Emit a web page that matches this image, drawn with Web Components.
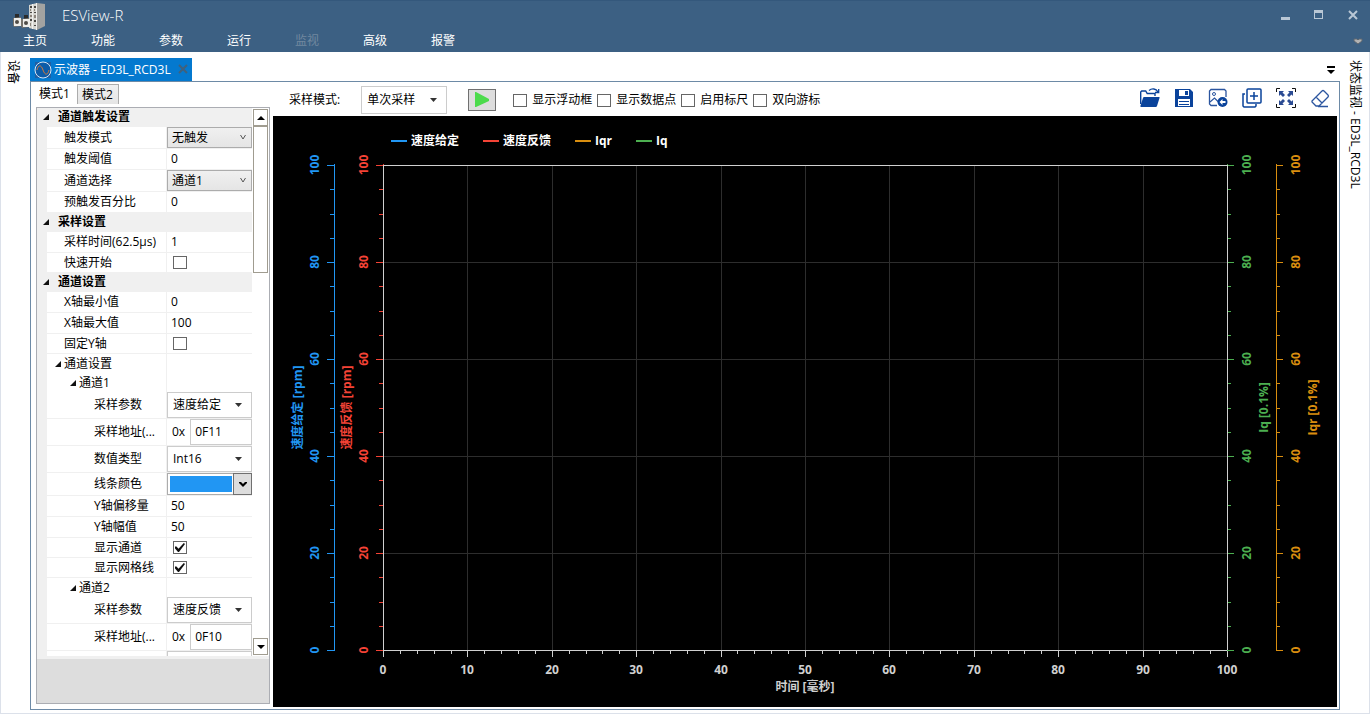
<!DOCTYPE html>
<html lang="zh-CN">
<head>
<meta charset="utf-8">
<title>ESView-R</title>
<style>
  body {
    margin: 0;
    font-family: "Open Sans", "Noto Sans CJK SC", sans-serif;
    font-size: 12px;
    line-height: 16px;
    color: #000;
  }
</style>
</head>
<body>
<es-app></es-app>

<script>
const controlReset = `
  *, *::before, *::after { box-sizing: border-box; }
  button, input, select { font: inherit; color: inherit; margin: 0; border-radius: 0; }
  button { padding: 0; border: none; background: none; cursor: pointer; }
  svg { display: block; }
`;

function attach(element, html) {
  const template = document.createElement("template");
  template.innerHTML = html;
  const root = element.attachShadow({ mode: "open", delegatesFocus: element.constructor.formAssociated === true });
  root.appendChild(template.content.cloneNode(true));
  return root;
}

const icons = {
  logo: `<svg width="34" height="27" viewBox="0 0 34 27">
    <path d="M17 2l8-2v27l-8-2z" fill="#d6d5d0"/>
    <path d="M25 0l8 1v22l-8 4z" fill="#a3a3a1"/>
    <path d="M20 1h1v25h-1zM24 0h1v27h-1z" fill="#f1f0ee"/>
    <path d="M18 3h2v2h-2zM22 3h2v2h-2zM18 9h2v1h-2zM22 9h2v1h-2zM18 16h2v2h-2zM22 17h2v2h-2zM22 22h2v1h-2z" fill="#4a4845"/>
    <path d="M18 6h1v2h-1zM22 6h1v2h-1zM18 12h2v2h-2zM22 12h2v3h-2zM18 20h1v3h-1z" fill="#8d857c"/>
    <path d="M3 11h4v5H3zM12 12h4v5h-4z" fill="#2b2b2b"/>
    <path d="M1 15l8-1v9l-7 1-1-2zM9 16l8-1v9l-7 1-1-2z" fill="#77736c"/>
    <path d="M2 15h7v8H2zM11 16h7v8h-7z" fill="#efeeea"/>
    <circle cx="5" cy="19" r="2" fill="#4e4b46"/><circle cx="14" cy="20" r="2" fill="#4e4b46"/>
  </svg>`,
  minimize: `<svg width="10" height="10" viewBox="0 0 10 10"><path d="M1 7h9v3H1z" fill="#b9c7d5"/></svg>`,
  maximize: `<svg width="10" height="10" viewBox="0 0 10 10"><path d="M0 0h9v9H0zM1 3v5h7V3z" fill="#b9c7d5" fill-rule="evenodd"/></svg>`,
  close: `<svg width="10" height="10" viewBox="0 0 10 10"><path d="M1 1l8 8M9 1l-8 8" stroke="#b9c7d5" stroke-width="2"/></svg>`,
  chevron: `<svg width="10" height="7" viewBox="0 0 10 7"><path d="M1 1h3l1 1 1-1h3v2L5 6 1 3z" fill="#b3b3b3" stroke="#5d6670"/></svg>`,
  scope: `<svg width="18" height="18" viewBox="0 0 18 18"><rect x="1" y="1" width="16" height="16" fill="#1f5fa3"/><circle cx="9" cy="9" r="8" fill="#0d5ca8" stroke="#d9e6f3"/><path d="M3 9c1-5 4-6 6 0s5 5 6 0" fill="none" stroke="#d07c3c"/></svg>`,
  tabClose: `<svg width="10" height="10" viewBox="0 0 10 10"><path d="M1 1l8 8M9 1l-8 8" stroke="#40617c" stroke-width="2"/></svg>`,
  tabList: `<svg width="8" height="8" viewBox="0 0 8 8"><path d="M0 0h8v2H0zM0 4h8L4 8z" fill="#000"/></svg>`,
  play: `<svg width="18" height="18" viewBox="0 0 18 18"><path d="M2 1h1l13 7v2L3 16H2z" fill="#4cdb4c"/></svg>`,
  open: `<svg width="20" height="20" viewBox="0 0 20 20"><path d="M.7 16V4l1-1h4l1.500 2.500H15V8" fill="none" stroke="#0a439b" stroke-width="1.400"/><path d="M4 9h15.500v1L17 18q-.5 1-1 1H1q-1 0-.500-1.500L3 10q.3-1 1-1z" fill="#0a439b"/><path d="M9 2.500c3-2.500 7-2 9 1.500M18.700 1v3.500H15" fill="none" stroke="#0a439b" stroke-width="1.300"/></svg>`,
  save: `<svg width="20" height="20" viewBox="0 0 20 20"><path d="M1 1h15l3 3v15H1z" fill="#0a439b"/><path d="M5 2h10v6H5zM4 11h12v7H4z" fill="#fff"/><path d="M11 3h3v4h-3z" fill="#0a439b"/><path d="M5 13.500h10M5 16.500h10" stroke="#0a439b"/></svg>`,
  image: `<svg width="20" height="20" viewBox="0 0 20 20"><path d="M9 17.500H3L1.500 16V3L3 1.500h13.500L18 3v6" fill="none" stroke="#2b559f" stroke-width="1.300"/><circle cx="6" cy="6" r="1.500" fill="none" stroke="#2b559f"/><path d="M2 14l4.500-4 4 4L14 10" fill="none" stroke="#2b559f" stroke-width="1.200"/><circle cx="14.500" cy="14" r="5" fill="#0a439b"/><path d="M11.500 14l3-3v2h3v2h-3v2z" fill="#fff"/></svg>`,
  copy: `<svg width="20" height="20" viewBox="0 0 20 20"><path d="M3 6H1v12l1 1h11l1-1v-2" fill="none" stroke="#0a439b" stroke-width="1.500"/><rect x="5" y="1" width="14" height="14" rx="1" fill="#fff" stroke="#0a439b" stroke-width="1.500"/><path d="M12 4v8M8 8h8" stroke="#0a439b" stroke-width="1.500"/></svg>`,
  fit: `<svg width="20" height="20" viewBox="0 0 20 20"><path d="M.5 4V.5H4M16 .5h3.500V4M19.500 16v3.500H16M4 19.500H.5V16" fill="none" stroke="#111"/><path d="M3 3h5L6.500 4.500 9 7 7 9 4.500 6.500 3 8zM17 3v5l-1.500-1.500L13 9l-2-2 2.500-2.500L12 3zM3 17v-5l1.500 1.500L7 11l2 2-2.500 2.500L8 17zM17 17h-5l1.500-1.500L11 13l2-2 2.500 2.500L17 12z" fill="#2b4b93"/></svg>`,
  erase: `<svg width="20" height="20" viewBox="0 0 20 20"><path d="M2 13L12 3q1-1 2 0l4 4q1 1 0 2L9 18H6l-4-4zM6 9l6 6M8 18.500h10" fill="none" stroke="#2b559f" stroke-width="1.300"/></svg>`,
};

class EsIcon extends HTMLElement {
  connectedCallback() {
    if (this.shadowRoot) return;
    attach(this, `
<style>
  :host { display: inline-flex; flex: none; }
  svg { display: block; }
</style>
${icons[this.getAttribute("name")]}`);
  }
}

class EsTitlebar extends HTMLElement {
  constructor() {
    super();
    attach(this, `
<style>
  ${controlReset}
  :host {
    display: block;
    height: 52px;
    background: #3c6083;
    border-top: 1px solid #34587c;
    color: #fff;
    box-sizing: border-box;
  }
  .title, .bar { display: flex; align-items: center; }
  .title { height: 30px; padding: 0 12px; }
  h1 { flex: 1; margin: 0; padding: 0 0 2px 16px; font-size: 15px; font-weight: 300; line-height: 20px; }
  .window { display: flex; gap: 24px; }
  .bar { height: 20px; padding: 0 7px 0 1px; }
  nav { display: flex; flex: 1; }
  nav button { padding: 0 22px; line-height: 22px; }
  nav button:disabled { color: #71889f; cursor: default; }
</style>
<div class="title">
  <es-icon name="logo"></es-icon>
  <h1>ESView-R</h1>
  <div class="window">
    <button aria-label="最小化"><es-icon name="minimize"></es-icon></button>
    <button aria-label="最大化"><es-icon name="maximize"></es-icon></button>
    <button aria-label="关闭"><es-icon name="close"></es-icon></button>
  </div>
</div>
<div class="bar">
  <nav>
    <button>主页</button>
    <button>功能</button>
    <button>参数</button>
    <button>运行</button>
    <button disabled>监视</button>
    <button>高级</button>
    <button>报警</button>
  </nav>
  <button aria-label="折叠"><es-icon name="chevron"></es-icon></button>
</div>`);
  }
}

class EsRail extends HTMLElement {
  constructor() {
    super();
    attach(this, `
<style>
  ${controlReset}
  :host { display: flex; justify-content: center; align-items: flex-start; width: 29px; flex: none; padding: 8px 5px 0 0; box-sizing: border-box; }
  :host([side="right"]) { padding-right: 0; }
  button { writing-mode: vertical-rl; text-orientation: sideways; line-height: 16px; white-space: nowrap; }
</style>
<button><slot></slot></button>`);
  }
}

class EsSelect extends HTMLElement {
  static formAssociated = true;

  connectedCallback() {
    if (this.shadowRoot) return;
    const value = this.getAttribute("value");
    attach(this, `
<style>
  ${controlReset}
  :host { display: flex; position: relative; align-items: stretch; }
  select {
    appearance: none;
    width: 100%;
    padding: 0 20px 0 5px;
    border: 1px solid #ccc;
    background: #fff;
    outline: none;
  }
  svg { position: absolute; right: 9px; top: calc(50% - 2px); pointer-events: none; }
  .chevron { display: none; }
  :host([raised]) select { padding-left: 4px; border-color: #acacac; background: linear-gradient(#f0f0f0, #e5e5e5); }
  :host([raised]) .arrow { display: none; }
  :host([raised]) .chevron { display: block; right: 6px; top: calc(50% - 3px); }
</style>
<select aria-label="${this.getAttribute("label")}"><option>${value}</option></select>
<svg class="arrow" width="8" height="4" viewBox="0 0 8 4"><path d="M0 0h7L3.500 4z" fill="#333"/></svg>
<svg class="chevron" width="6" height="5" viewBox="0 0 6 5"><path d="M.5 0L3 4 5.500 0" fill="none" stroke="#555"/></svg>`);
  }
}

class EsCheck extends HTMLElement {
  static formAssociated = true;

  connectedCallback() {
    if (this.shadowRoot) return;
    const label = this.getAttribute("label");
    attach(this, `
<style>
  ${controlReset}
  :host { display: inline-flex; }
  label { display: flex; align-items: center; gap: 5px; }
  input {
    appearance: none;
    display: grid;
    place-items: center;
    width: 14px;
    height: 13px;
    border: 1px solid #666;
    background: #fff;
  }
  input:checked::before {
    content: "";
    width: 10px;
    height: 9px;
    background: #111;
    clip-path: polygon(0 40%, 15% 40%, 35% 65%, 88% 0, 100% 12%, 40% 100%, 30% 100%, 0 60%);
  }
</style>
<label><input type="checkbox" aria-label="${label}" ${this.hasAttribute("checked") ? "checked" : ""}><slot></slot></label>`);
  }
}

class EsGroup extends HTMLElement {
  connectedCallback() {
    if (this.shadowRoot) return;
    attach(this, `
<style>
  ${controlReset}
  :host { display: block; }
  button {
    display: flex;
    align-items: center;
    width: 100%;
    height: 19px;
    gap: 9px;
    padding: 0 0 2px 6px;
    background: #f0f0f0;
    font-weight: bold;
  }
  .rows { margin-left: 10px; background: #fff; }
  :host([closed]) .rows { display: none; }
</style>
<button><svg width="6" height="6" viewBox="0 0 6 6"><path d="M6 0v6H0z" fill="#111"/></svg>${this.getAttribute("heading")}</button>
<div class="rows"><slot></slot></div>`);
    this.shadowRoot.querySelector("button").addEventListener("click", () => {
      this.toggleAttribute("closed");
    });
  }
}

class EsRow extends HTMLElement {
  connectedCallback() {
    if (this.shadowRoot) return;
    const kind = this.getAttribute("kind");
    const label = this.getAttribute("label");
    attach(this, `
<style>
  ${controlReset}
  :host { display: grid; grid-template-columns: 120px 1fr; height: 21px; }
  :host([kind="raised"]) { height: 22px; }
  :host([kind="check"]) { height: 20px; }
  :host([kind="branch"]) { height: 19px; }
  :host([kind="combo"]), :host([kind="hex"]) { height: 27px; }
  :host([kind="color"]) { height: 23px; }
  .name, .value { border-bottom: 1px solid #f0f0f0; min-width: 0; display: flex; align-items: center; }
  .name { border-right: 1px solid #f0f0f0; padding-left: 17px; white-space: nowrap; }
  :host([level="2"]) .name { padding-left: 32px; }
  :host([level="3"]) .name { padding-left: 47px; }
  :host([kind="branch"]) .name, :host([kind="branch"]) .value { border-bottom: none; }
  .twist { display: flex; align-items: center; gap: 3px; margin-left: -9px; }
  input { width: 100%; min-width: 0; padding: 0 4px; border: none; outline: none; background: none; }
  es-select { flex: 1; align-self: stretch; }
  es-check { margin-left: 6px; }
  .prefix { padding: 0 5px; }
  .hex { align-self: stretch; border: 1px solid #ccc; flex: 1; }
  .color { display: flex; flex: 1; align-self: stretch; border: 1px solid #acacac; }
  .swatch { flex: 1; margin: 2px; background: #2196f3; }
  .drop { display: grid; place-items: center; width: 19px; margin: -1px; border: 1px solid #707070; background: #ddd; }
</style>
<div class="name">${this.nameMarkup(kind, label)}</div>
<div class="value">${this.valueMarkup(kind, label, this.getAttribute("value"))}</div>`);
  }

  nameMarkup(kind, label) {
    if (kind === "branch") {
      return `<button class="twist"><svg width="6" height="6" viewBox="0 0 6 6"><path d="M6 0v6H0z" fill="#111"/></svg>${label}</button>`;
    }
    return `<label for="field">${label}</label>`;
  }

  valueMarkup(kind, label, value) {
    switch (kind) {
      case "raised":
        return `<es-select id="field" raised label="${label}" value="${value}"></es-select>`;
      case "combo":
        return `<es-select id="field" label="${label}" value="${value}"></es-select>`;
      case "check":
        return `<es-check id="field" label="${label}" ${value ? "checked" : ""}></es-check>`;
      case "hex":
        return `<span class="prefix">0x</span><input id="field" class="hex" type="text" value="${value}">`;
      case "color":
        return `<div class="color"><span class="swatch"></span><button id="field" class="drop" aria-label="${label}"><svg width="8" height="5" viewBox="0 0 8 5"><path d="M0 0h2l2 2 2-2h2v1L4 5 0 1z" fill="#000"/></svg></button></div>`;
      case "branch":
        return "";
      default:
        return `<input id="field" type="text" value="${value}">`;
    }
  }
}

class EsPropertyGrid extends HTMLElement {
  constructor() {
    super();
    const root = attach(this, `
<style>
  ${controlReset}
  :host { display: flex; flex-direction: column; min-height: 0; border: 1px solid #abadb3; background: #ddd; }
  .body { display: flex; flex: 1; min-height: 0; background: #fff; border-bottom: 3px solid #f0f0f0; }
  .list { flex: 1; min-width: 0; overflow: hidden; background: linear-gradient(90deg, #f0f0f0 10px, #fff 10px); }
  .scroll { display: flex; flex-direction: column; width: 17px; padding: 1px; }
  .scroll button { display: grid; place-items: center; height: 17px; border: 1px solid #a09c90; background: #fff; }
  .thumb { height: 147px; border: 1px solid #a09c90; background: #fff; }
  .track { flex: 1; }
  .help { height: 44px; }
</style>
<div class="body">
  <div class="list"><slot></slot></div>
  <div class="scroll">
    <button aria-label="向上"><svg width="8" height="4" viewBox="0 0 8 4"><path d="M0 4h8L4 0z"/></svg></button>
    <div class="thumb"></div>
    <div class="track"></div>
    <button aria-label="向下"><svg width="8" height="4" viewBox="0 0 8 4"><path d="M0 0h8L4 4z"/></svg></button>
  </div>
</div>
<div class="help"></div>`);
    const list = root.querySelector(".list");
    const [up, down] = root.querySelectorAll(".scroll button");
    up.addEventListener("click", () => { list.scrollTop -= 40; });
    down.addEventListener("click", () => { list.scrollTop += 40; });
  }
}

class EsSettings extends HTMLElement {
  constructor() {
    super();
    attach(this, `
<style>
  ${controlReset}
  :host { display: flex; flex-direction: column; width: 242px; flex: none; padding: 2px 3px 5px 5px; box-sizing: border-box; min-height: 0; }
  .tabs { display: flex; align-items: stretch; height: 20px; margin-bottom: 3px; }
  .tabs .current { padding: 0 7px 0 3px; }
  .tabs .other { padding: 0 5px 0 4px; border: 1px solid #acacac; border-bottom: none; background: linear-gradient(#f0f0f0, #e5e5e5); }
  es-property-grid { flex: 1; }
</style>
<div class="tabs"><button class="current">模式1</button><button class="other">模式2</button></div>
<es-property-grid>
  <es-group heading="通道触发设置">
    <es-row kind="raised" label="触发模式" value="无触发"></es-row>
    <es-row label="触发阈值" value="0"></es-row>
    <es-row kind="raised" label="通道选择" value="通道1"></es-row>
    <es-row label="预触发百分比" value="0"></es-row>
  </es-group>
  <es-group heading="采样设置">
    <es-row label="采样时间(62.5μs)" value="1"></es-row>
    <es-row kind="check" label="快速开始"></es-row>
  </es-group>
  <es-group heading="通道设置">
    <es-row label="X轴最小值" value="0"></es-row>
    <es-row label="X轴最大值" value="100"></es-row>
    <es-row kind="check" label="固定Y轴"></es-row>
    <es-row kind="branch" label="通道设置"></es-row>
    <es-row kind="branch" level="2" label="通道1"></es-row>
    <es-row kind="combo" level="3" label="采样参数" value="速度给定"></es-row>
    <es-row kind="hex" level="3" label="采样地址(..." value="0F11"></es-row>
    <es-row kind="combo" level="3" label="数值类型" value="Int16"></es-row>
    <es-row kind="color" level="3" label="线条颜色"></es-row>
    <es-row level="3" label="Y轴偏移量" value="50"></es-row>
    <es-row level="3" label="Y轴幅值" value="50"></es-row>
    <es-row kind="check" level="3" label="显示通道" value="on"></es-row>
    <es-row kind="check" level="3" label="显示网格线" value="on"></es-row>
    <es-row kind="branch" level="2" label="通道2"></es-row>
    <es-row kind="combo" level="3" label="采样参数" value="速度反馈"></es-row>
    <es-row kind="hex" level="3" label="采样地址(..." value="0F10"></es-row>
    <es-row kind="combo" level="3" label="" value=""></es-row>
  </es-group>
</es-property-grid>`);
  }
}

class EsToolbar extends HTMLElement {
  constructor() {
    super();
    attach(this, `
<style>
  ${controlReset}
  :host { display: flex; align-items: center; height: 34px; padding: 2px 9px 0 16px; box-sizing: border-box; white-space: nowrap; }
  es-select { width: 86px; height: 28px; margin: 0 21px; }
  .run { display: grid; place-items: center; width: 28px; height: 22px; margin-right: 17px; border: 1px solid #707070; background: #ddd; }
  .checks { display: flex; gap: 5px; flex: 1; }
  .tools { display: flex; gap: 14px; }
</style>
<span>采样模式:</span>
<es-select label="采样模式" value="单次采样"></es-select>
<button class="run" aria-label="开始"><es-icon name="play"></es-icon></button>
<div class="checks">
  <es-check label="显示浮动框">显示浮动框</es-check>
  <es-check label="显示数据点">显示数据点</es-check>
  <es-check label="启用标尺">启用标尺</es-check>
  <es-check label="双向游标">双向游标</es-check>
</div>
<div class="tools">
  <button aria-label="打开"><es-icon name="open"></es-icon></button>
  <button aria-label="保存"><es-icon name="save"></es-icon></button>
  <button aria-label="图片"><es-icon name="image"></es-icon></button>
  <button aria-label="复制"><es-icon name="copy"></es-icon></button>
  <button aria-label="全屏"><es-icon name="fit"></es-icon></button>
  <button aria-label="清除"><es-icon name="erase"></es-icon></button>
</div>`);
  }
}

const channels = [
  { name: "速度给定", unit: "rpm", color: "#2196f3", side: -1, offset: 49 },
  { name: "速度反馈", unit: "rpm", color: "#f44336", side: -1, offset: 0 },
  { name: "Iqr", unit: "0.1%", color: "#d98e0f", side: 1, offset: 49 },
  { name: "Iq", unit: "0.1%", color: "#4caf50", side: 1, offset: 0 },
];

class EsChart extends HTMLElement {
  constructor() {
    super();
    const root = attach(this, `
<style>
  :host { display: flex; flex-direction: column; min-height: 0; background: #000; font-weight: bold; }
  .legend { display: flex; gap: 24px; padding: 17px 0 0 118px; height: 16px; color: #fff; }
  .legend span { display: flex; align-items: center; gap: 4px; }
  .legend i { width: 16px; height: 2px; }
  .plot { flex: 1; min-height: 0; overflow: hidden; }
  svg { display: block; font-size: 12px; }
</style>
<div class="legend">${channels.map((c) => `<span><i style="background: ${c.color}"></i>${c.name}</span>`).join("")}</div>
<div class="plot"></div>`);
    this.plot = root.querySelector(".plot");
  }

  connectedCallback() {
    this.draw();
    this.observer = new ResizeObserver(() => this.draw());
    this.observer.observe(this.plot);
  }

  disconnectedCallback() {
    this.observer.disconnect();
  }

  draw() {
    const width = this.plot.clientWidth;
    const height = this.plot.clientHeight;
    const left = 110;
    const right = width - 110;
    const top = 16;
    const bottom = height - 57;
    if (right <= left || bottom <= top) return;

    const xAt = (v) => Math.round(left + ((right - left) * v) / 100);
    const yAt = (v) => Math.round(bottom - ((bottom - top) * v) / 100);
    const line = (x, y, w, h, color) =>
      `<rect x="${x}" y="${y}" width="${w}" height="${h}" fill="${color}"/>`;
    const upright = (x, y, text, color) =>
      `<text transform="translate(${x + 4} ${y}) rotate(-90)" text-anchor="middle" fill="${color}">${text}</text>`;

    let out = "";
    for (let v = 10; v < 100; v += 10) out += line(xAt(v), top, 1, bottom - top, "#2d2d2d");
    for (let v = 20; v < 100; v += 20) out += line(left, yAt(v), right - left, 1, "#2d2d2d");

    for (let v = 0; v <= 100; v += 2) {
      const major = v % 10 === 0;
      out += line(xAt(v), bottom, 1, major ? 7 : 4, "#d0d0d0");
      if (major) out += `<text x="${xAt(v)}" y="${bottom + 24}" text-anchor="middle" fill="#d0d0d0">${v}</text>`;
    }
    out += `<text x="${(left + right) / 2}" y="${bottom + 41}" text-anchor="middle" fill="#d0d0d0">时间 [毫秒]</text>`;

    for (const c of channels) {
      const x = (c.side < 0 ? left : right) + c.side * c.offset;
      out += line(x, top - 1, 1, bottom - top + 2, c.color);
      for (let v = 0; v <= 100; v += 5) {
        const size = v % 20 === 0 ? 7 : 4;
        out += line(c.side < 0 ? x - size : x, yAt(v), size, 1, c.color);
        if (v % 20 === 0) out += upright(x + c.side * (c.side < 0 ? 19 : 20), yAt(v), v, c.color);
      }
      out += upright(x + c.side * (c.side < 0 ? 36 : 37), (top + bottom) / 2, `${c.name} [${c.unit}]`, c.color);
    }

    out += line(left, top, right - left, 1, "#d0d0d0");
    out += line(left, bottom, right - left, 1, "#d0d0d0");
    out += line(left, top, 1, bottom - top, "#d0d0d0");
    out += line(right, top, 1, bottom - top, "#d0d0d0");
    this.plot.innerHTML = `<svg width="${width}" height="${height}">${out}</svg>`;
  }
}

class EsDocument extends HTMLElement {
  constructor() {
    super();
    attach(this, `
<style>
  ${controlReset}
  :host { display: flex; flex-direction: column; min-width: 0; min-height: 0; padding: 6px 0 3px; box-sizing: border-box; }
  .strip { display: flex; align-items: center; justify-content: space-between; height: 23px; padding-right: 5px; }
  .tab { display: flex; align-items: center; height: 23px; padding: 0 4px; gap: 2px; background: #0479cf; color: #fff; }
  .tab button { margin-left: 5px; }
  .panel { display: flex; flex: 1; min-height: 0; border: 1px solid #6d8aa6; }
  .view { display: flex; flex-direction: column; flex: 1; min-width: 0; min-height: 0; }
  es-chart { flex: 1; margin: 0 2px 2px 0; }
</style>
<div class="strip">
  <div class="tab">
    <es-icon name="scope"></es-icon>
    <span>示波器 - ED3L_RCD3L</span>
    <button aria-label="关闭"><es-icon name="tabClose"></es-icon></button>
  </div>
  <button aria-label="窗口列表"><es-icon name="tabList"></es-icon></button>
</div>
<div class="panel">
  <es-settings></es-settings>
  <div class="view">
    <es-toolbar></es-toolbar>
    <es-chart></es-chart>
  </div>
</div>`);
  }
}

class EsApp extends HTMLElement {
  constructor() {
    super();
    attach(this, `
<style>
  :host { display: flex; flex-direction: column; height: 100vh; background: #fff; }
  .main { display: flex; flex: 1; min-height: 0; border: 1px solid #dce1ea; border-top: none; }
  es-document { flex: 1; }
</style>
<es-titlebar></es-titlebar>
<div class="main">
  <es-rail>设备</es-rail>
  <es-document></es-document>
  <es-rail side="right">状态监视 - ED3L_RCD3L</es-rail>
</div>`);
  }
}

customElements.define("es-icon", EsIcon);
customElements.define("es-select", EsSelect);
customElements.define("es-check", EsCheck);
customElements.define("es-titlebar", EsTitlebar);
customElements.define("es-rail", EsRail);
customElements.define("es-row", EsRow);
customElements.define("es-group", EsGroup);
customElements.define("es-property-grid", EsPropertyGrid);
customElements.define("es-settings", EsSettings);
customElements.define("es-toolbar", EsToolbar);
customElements.define("es-chart", EsChart);
customElements.define("es-document", EsDocument);
customElements.define("es-app", EsApp);
</script>
</body>
</html>
